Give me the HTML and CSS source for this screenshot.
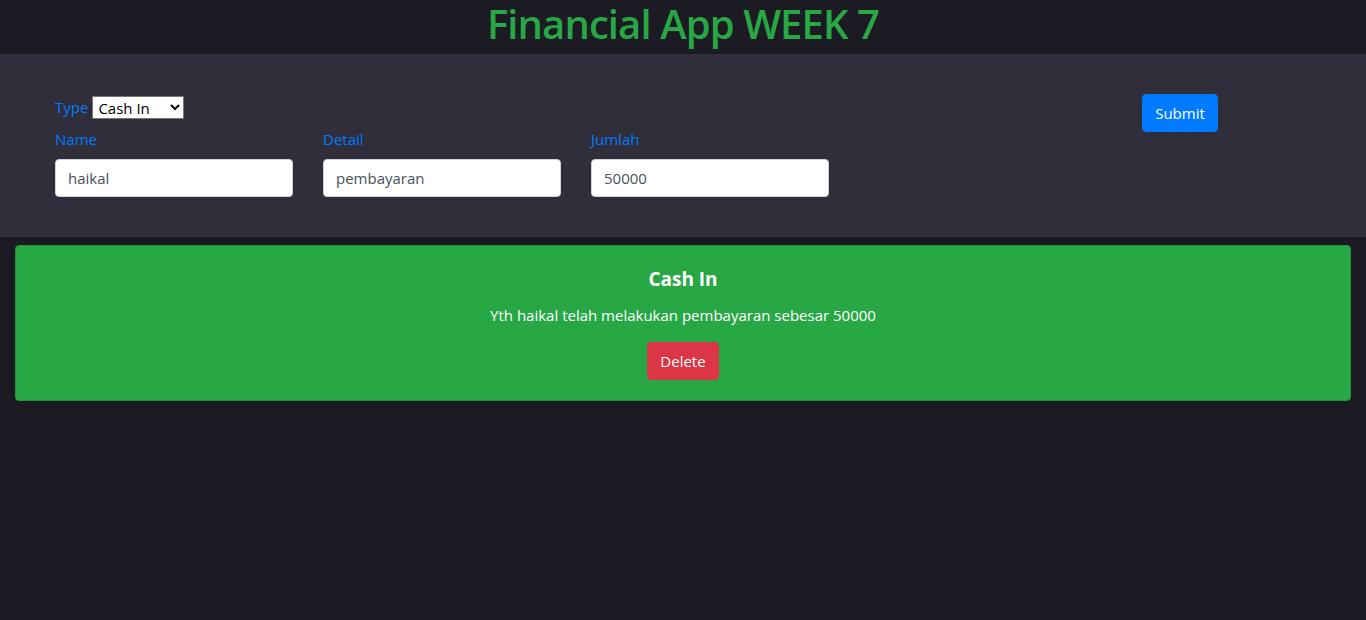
FILE: index.html
```html
<!DOCTYPE html>
<html lang="en">
<head>
<meta charset="utf-8">
<title>Financial App WEEK 7</title>
<link rel="stylesheet" href="styles.css">
</head>
<body>
<header class="topbar">
  <h1 class="title">Financial App WEEK 7</h1>
</header>
<section class="form-area">
  <form class="form-grid">
    <div class="fields">
      <div class="type-row">
        <label class="lbl" for="type">Type</label>
        <select id="type" class="type-select">
          <option>Cash In</option>
          <option>Cash Out</option>
        </select>
      </div>
      <div class="inputs">
        <div class="field">
          <label class="lbl" for="name">Name</label>
          <input id="name" class="ctrl" type="text" value="haikal">
        </div>
        <div class="field">
          <label class="lbl" for="detail">Detail</label>
          <input id="detail" class="ctrl" type="text" value="pembayaran">
        </div>
        <div class="field">
          <label class="lbl" for="jumlah">Jumlah</label>
          <input id="jumlah" class="ctrl" type="text" value="50000">
        </div>
      </div>
    </div>
    <div class="actions">
      <button type="button" class="btn btn-primary">Submit</button>
    </div>
  </form>
</section>
<section class="card">
  <h5 class="card-title">Cash In</h5>
  <p class="card-text">Yth haikal telah melakukan pembayaran sebesar 50000</p>
  <button type="button" class="btn btn-danger">Delete</button>
</section>
</body>
</html>
```
FILE: styles.css
```css
* { box-sizing: border-box; }
html, body { margin: 0; padding: 0; }
body {
  background: #1b1a23;
  font-family: "Open Sans", "Noto Sans", sans-serif;
  font-size: 16px;
  line-height: 1.5;
  color: #212529;
  height: 620px;
}
.topbar {
  height: 54px;
  background: #1c1b24;
  display: flex;
  align-items: flex-start;
  justify-content: center;
}
.title {
  margin: 0;
  color: #28a745;
  font-size: 40px;
  font-weight: 600;
  line-height: 48px;
  letter-spacing: -0.9px;
}
.form-area {
  background: #2f2e3a;
  padding: 40px 55px 40px 55px;
}
.form-grid {
  display: grid;
  grid-template-columns: 1fr 169px;
}
.type-row {
  display: flex;
  align-items: center;
  height: 24px;
  margin-top: 1px;
  margin-bottom: 8px;
  gap: 4px;
}
.lbl {
  color: #007bff;
  font-size: 15px;
  display: block;
}
.type-select {
  width: 92px;
  height: 23px;
  font-family: "Open Sans", sans-serif;
  font-size: 15px;
  background: #fff;
  color: #000;
  border: 1px solid #767676;
  border-radius: 0;
  padding: 0 1px;
}
.inputs {
  display: flex;
  gap: 30px;
}
.field {
  width: 238px;
  display: flex;
  flex-direction: column;
}
.field .lbl {
  line-height: 24px;
  margin-bottom: 8px;
}
.ctrl {
  height: 38px;
  width: 238px;
  padding: 6px 12px;
  border: 1px solid #ced4da;
  border-radius: 4px;
  background: #fff;
  color: #495057;
  font-family: "Open Sans", sans-serif;
  font-size: 15px;
}
.actions {
  display: flex;
  align-items: flex-start;
}
.btn {
  display: inline-block;
  height: 38px;
  padding: 0 12px;
  border: 1px solid transparent;
  border-radius: 4px;
  font-family: "Open Sans", sans-serif;
  font-size: 15px;
  line-height: 36px;
  color: #fff;
  cursor: pointer;
}
.btn-primary {
  background: #007bff;
  border-color: #007bff;
  width: 76px;
  padding: 0;
}
.btn-danger {
  background: #dc3545;
  border-color: #dc3545;
  width: 72px;
  padding: 0;
}
.card {
  margin: 8px 15px 0 15px;
  background: #28a745;
  border: 1px solid #23923d;
  border-radius: 4px;
  padding: 20px;
  text-align: center;
}
.card-title {
  margin: 0 0 12px 0;
  padding-top: 1px;
  color: #fff;
  font-size: 19px;
  font-weight: 700;
  line-height: 24px;
}
.card-text {
  margin: 0 0 15px 0;
  color: #fff;
  font-size: 15px;
  line-height: 24px;
}
```
